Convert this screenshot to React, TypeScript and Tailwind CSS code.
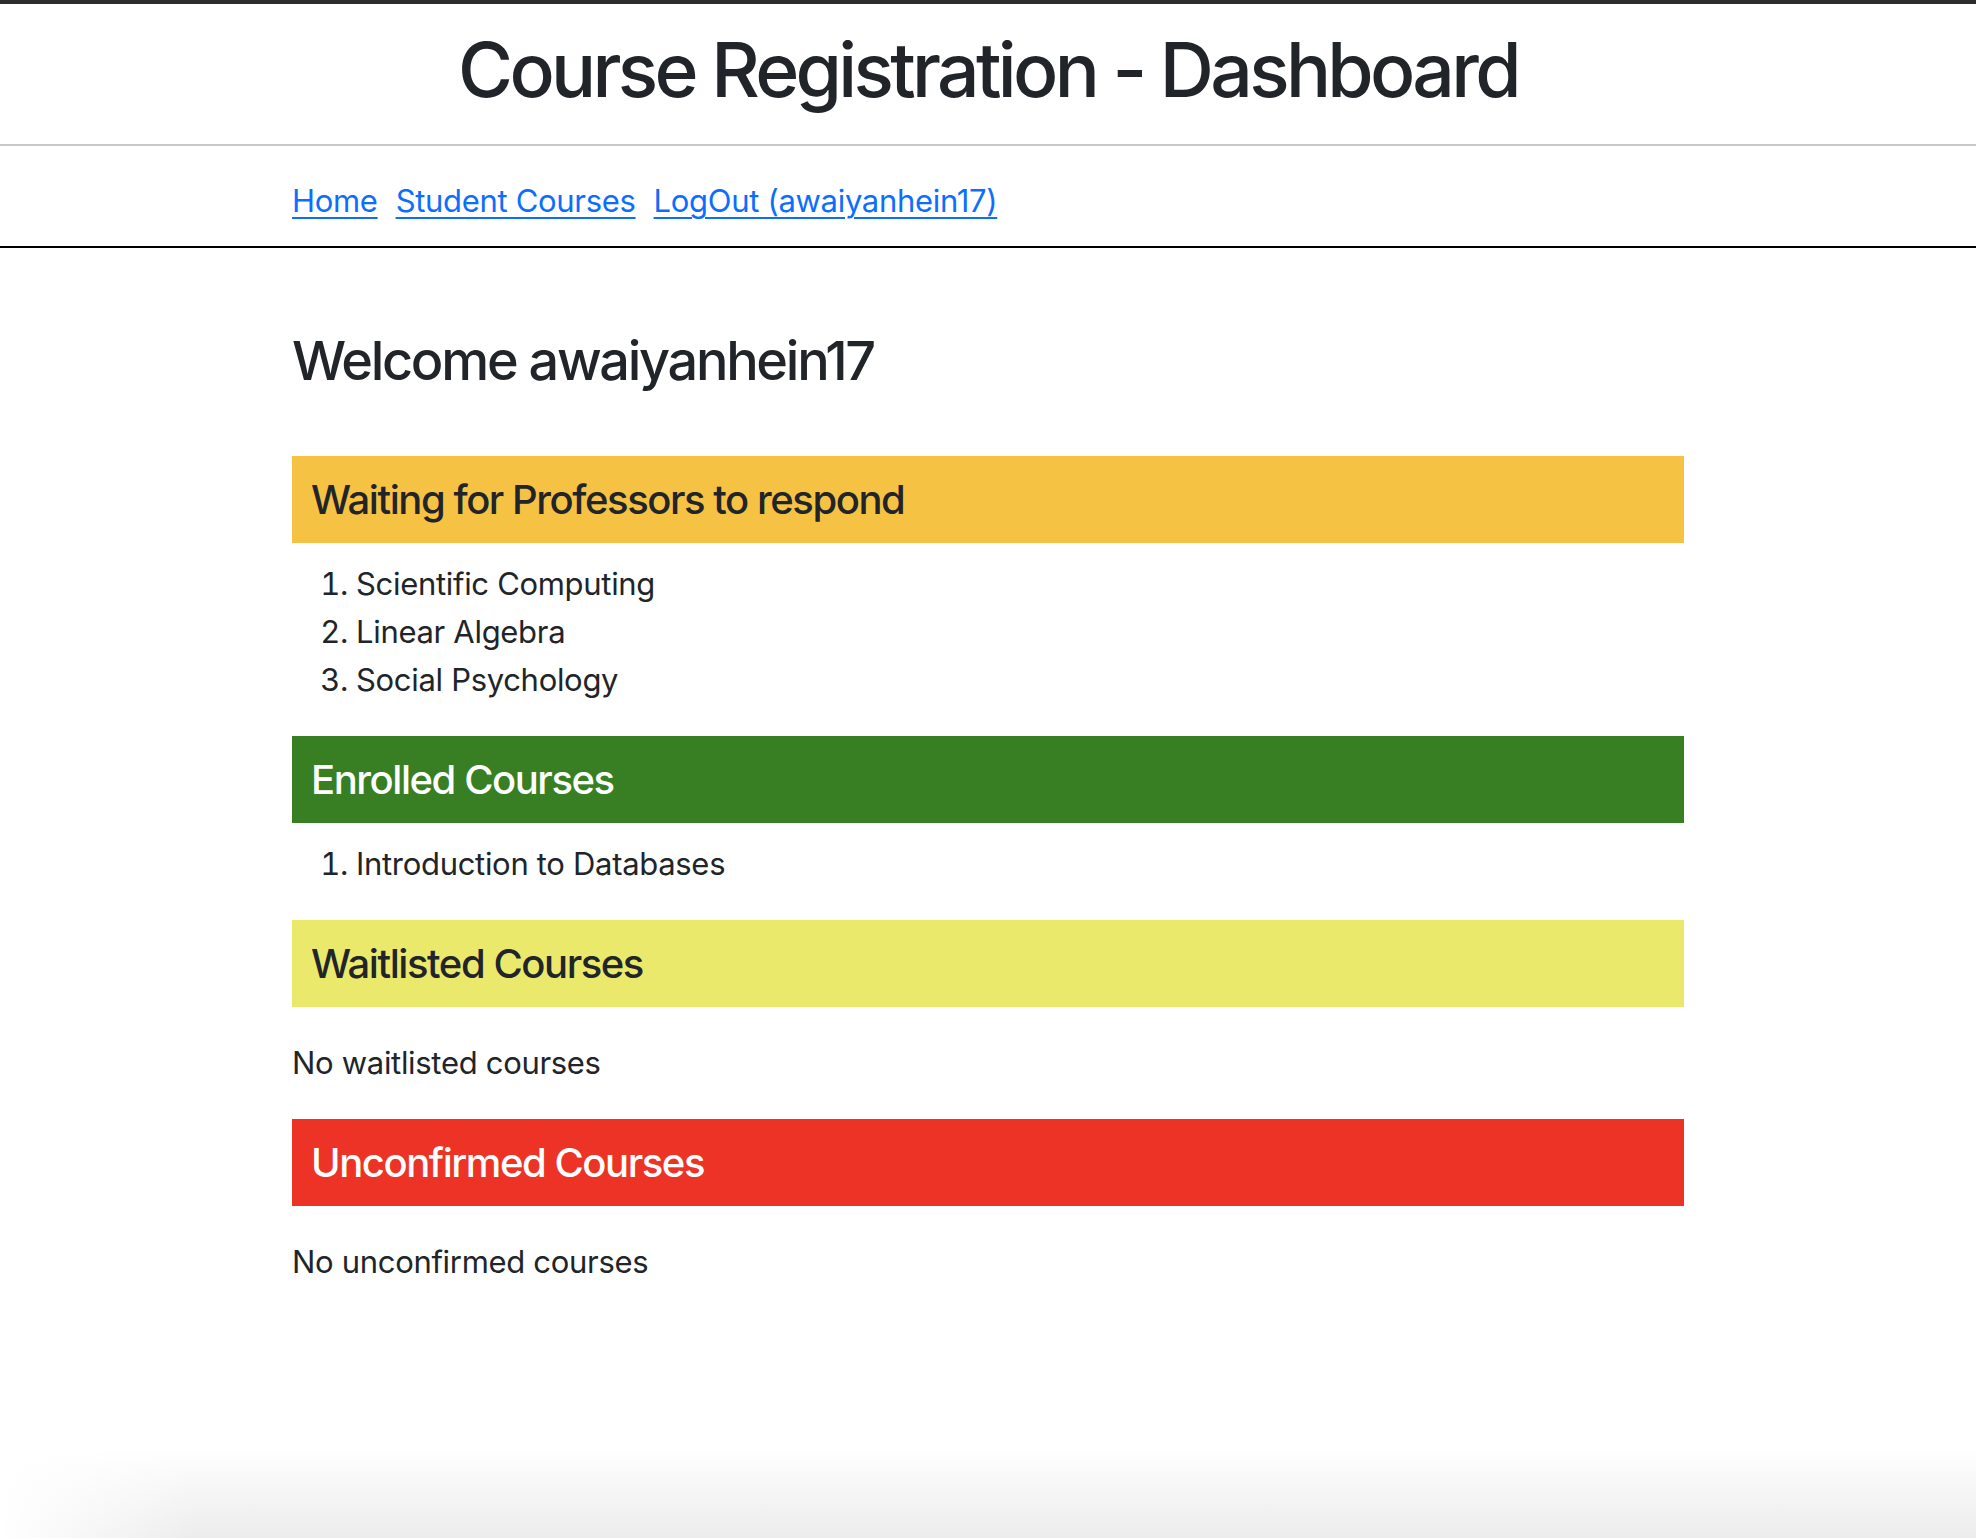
import React from "react";

const pending = ["Scientific Computing", "Linear Algebra", "Social Psychology"];
const enrolled = ["Introduction to Databases"];

function SectionBar({ title, className }: { title: string; className: string }) {
  return (
    <div className={`h-[87px] flex items-center pl-[19px] ${className}`}>
      <h5 className="text-[40px] leading-[48px] font-medium tracking-[-0.036em]">{title}</h5>
    </div>
  );
}

function CourseList({ items }: { items: string[] }) {
  return (
    <ol className="mt-[17px] mb-[32px] pl-[64px] list-decimal text-[31px] leading-[48px] tracking-[-0.01em]">
      {items.map(c => (
        <li key={c}>{c}</li>
      ))}
    </ol>
  );
}

export default function App() {
  return (
    <div
      className="min-h-[1538px] flex flex-col bg-white text-[#212529]"
      style={{ fontFamily: "Inter, 'Noto Sans', 'Liberation Sans', sans-serif" }}
    >
      <div className="h-[4px] bg-[#2c2c2e]" />

      {/* Header */}
      <header className="pt-[18px] pb-[26px] border-b-2 border-[#c9c9c9] text-center">
        <h1 className="text-[75px] leading-[96px] font-medium tracking-[-0.049em]">Course Registration - Dashboard</h1>
      </header>

      {/* Nav */}
      <nav className="h-[102px] border-b-2 border-black">
        <div className="w-[1440px] mx-auto px-6 pt-[31px] flex gap-[18px] text-[31px] leading-[48px] tracking-[-0.01em]">
          <a href="#" className="text-[#0d6efd] underline underline-offset-[5px] decoration-2">Home</a>
          <a href="#" className="text-[#0d6efd] underline underline-offset-[5px] decoration-2">Student Courses</a>
          <a href="#" className="text-[#0d6efd] underline underline-offset-[5px] decoration-2">LogOut (awaiyanhein17)</a>
        </div>
      </nav>

      {/* Main */}
      <main className="w-[1440px] mx-auto px-6 pt-[79px]">
        <h3 className="text-[54px] leading-[67px] font-medium mb-[62px] tracking-[-0.042em]">Welcome awaiyanhein17</h3>

        <SectionBar title="Waiting for Professors to respond" className="bg-[#f6c243]" />
        <CourseList items={pending} />

        <SectionBar title="Enrolled Courses" className="bg-[#387f23] text-white" />
        <CourseList items={enrolled} />

        <SectionBar title="Waitlisted Courses" className="bg-[#ebe96b]" />
        <p className="my-[32px] text-[31px] leading-[48px] tracking-[-0.01em]">No waitlisted courses</p>

        <SectionBar title="Unconfirmed Courses" className="bg-[#ec3325] text-white" />
        <p className="my-[32px] text-[31px] leading-[48px] tracking-[-0.01em]">No unconfirmed courses</p>
      </main>

      <div className="flex-1" />
      {/* window shadow at bottom */}
      <div className="relative h-[90px] bg-gradient-to-b from-white to-[#ececec]">
        <div className="absolute inset-y-0 left-0 w-[200px] bg-gradient-to-r from-white to-transparent" />
      </div>
    </div>
  );
}
